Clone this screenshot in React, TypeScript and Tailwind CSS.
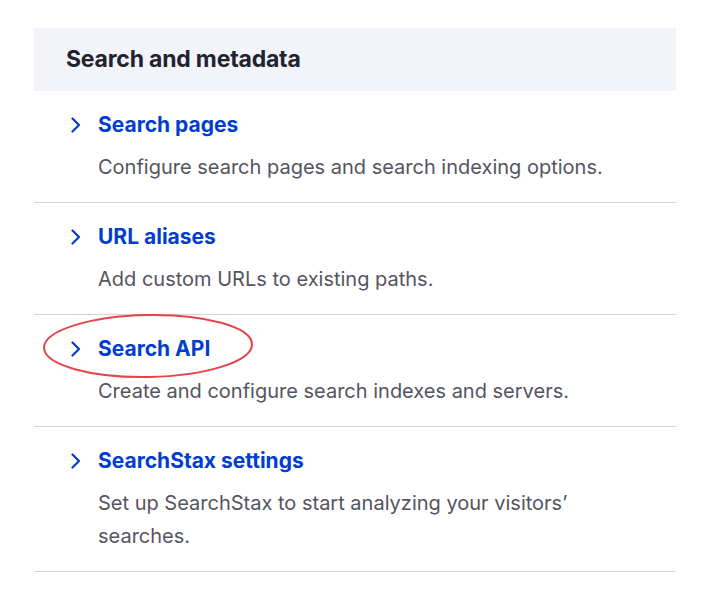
const items = [
  { title: "Search pages", desc: "Configure search pages and search indexing options." },
  { title: "URL aliases", desc: "Add custom URLs to existing paths." },
  { title: "Search API", desc: "Create and configure search indexes and servers.", circled: true },
  { title: "SearchStax settings", desc: "Set up SearchStax to start analyzing your visitors’ searches." },
];

function Chevron() {
  return (
    <svg width="12" height="18" viewBox="0 0 12 18" className="shrink-0" aria-hidden>
      <path d="M2.5 2.5 L9 9 L2.5 15.5" fill="none" stroke="#003ecc" strokeWidth="2.2" strokeLinecap="round" strokeLinejoin="round" />
    </svg>
  );
}

export default function App() {
  return (
    <div className="h-[601px] w-[720px] bg-white pt-[28px] font-['Inter',sans-serif]">
      <section className="ml-[34px] w-[642px]">
        <h2 className="flex h-[63px] items-center bg-[#f3f4f9] px-[32px] text-[23px] font-bold tracking-[-0.2px] text-[#222330]">
          Search and metadata
        </h2>
        <ul>
          {items.map((it) => (
            <li key={it.title} className="relative border-b border-[#d3d4d9] pb-[18px] pr-[36px] pt-[20px]">
              <div className="flex h-[28px] items-center pl-[36px]">
                <Chevron />
                <a className="ml-[16px] text-[21px] font-bold text-[#003ecc]">{it.title}</a>
              </div>
              <p className="ml-[64px] mt-[12px] text-[20px] leading-[33px] text-[#545560]">{it.desc}</p>
              {it.circled && (
                <svg className="pointer-events-none absolute left-[8px] top-[-2px]" width="214" height="68" viewBox="0 0 214 68" aria-hidden>
                  <ellipse cx="106" cy="33" rx="104" ry="31" fill="none" stroke="#e4444a" strokeWidth="2" transform="rotate(-1 106 33)" />
                </svg>
              )}
            </li>
          ))}
        </ul>
      </section>
    </div>
  );
}
